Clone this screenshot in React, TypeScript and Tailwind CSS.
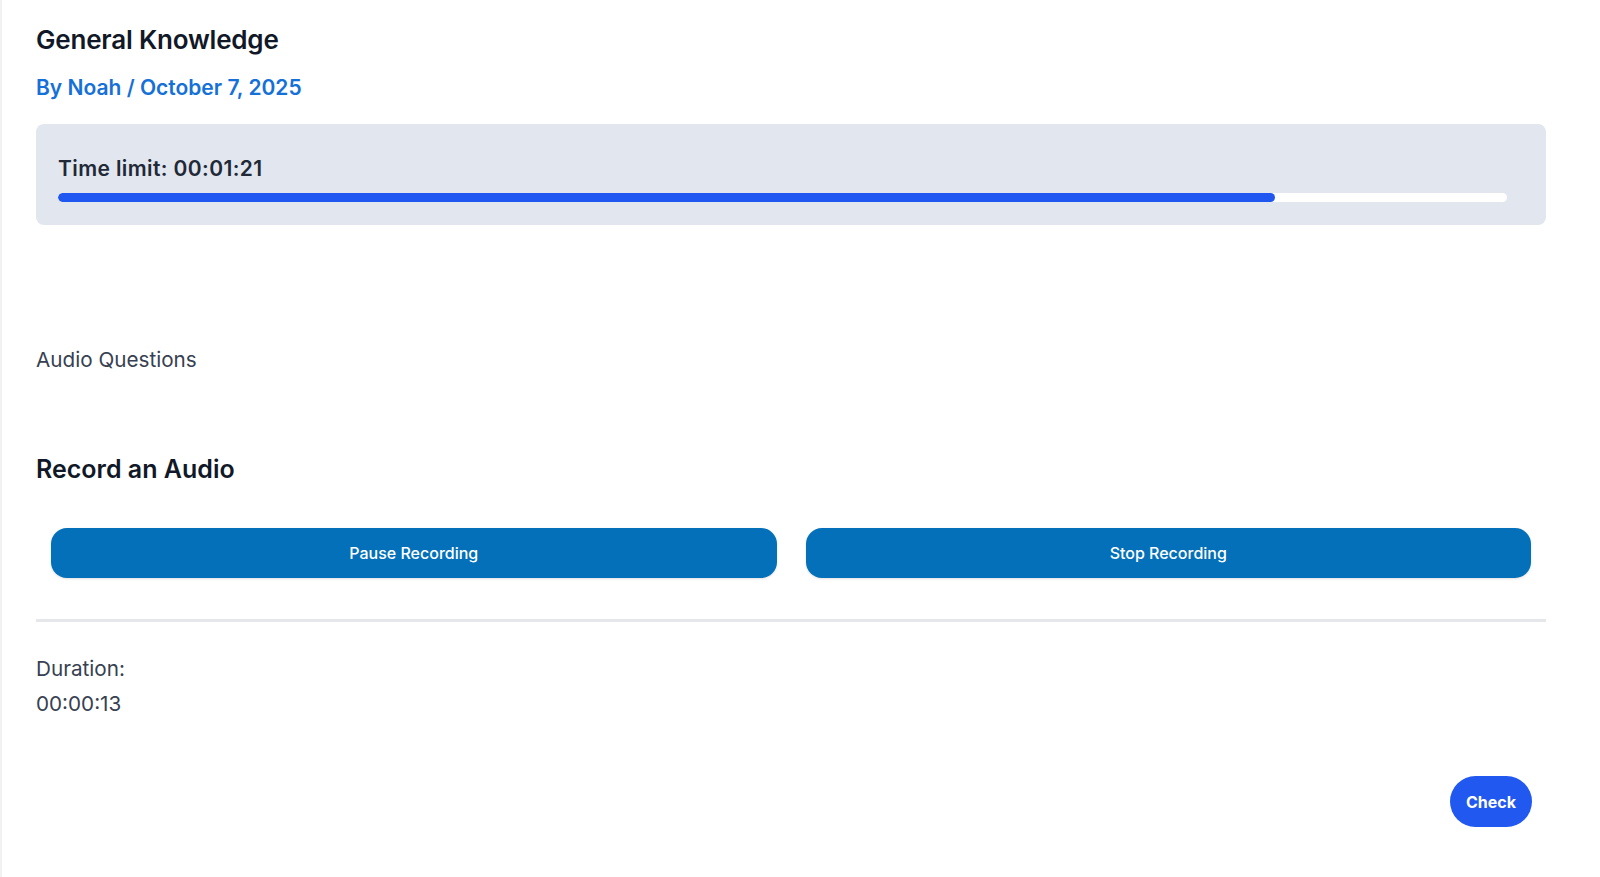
import React from 'react';

const font = { fontFamily: 'Inter, "Noto Sans", sans-serif' };

const QuizAudio: React.FC = () => {
  const elapsed = 84; // percent of time used

  return (
    <div style={font} className="min-h-[877px] bg-white border-l-2 border-l-[#f1f1f1] pl-[34px] pr-[54px] pt-[24px] text-[#1f2937]">
      <h1 className="text-[26px] leading-[31px] font-semibold text-[#111827] tracking-[-0.2px]">General Knowledge</h1>
      <p className="mt-[16px] text-[21px] leading-[33px] font-semibold text-[#1570d8]">By Noah / October 7, 2025</p>

      <div className="mt-[20px] h-[101px] rounded-lg bg-[#e2e6ee] pl-[22px] pr-[39px] pt-[31px]">
        <p className="text-[21px] leading-[28px] font-semibold text-[#1f2937] tracking-[0.4px]">Time limit: 00:01:21</p>
        <div className="mt-[10px] h-[9px] w-full rounded-full bg-white overflow-hidden">
          <div className="h-full rounded-full bg-[#2157f1]" style={{ width: `${elapsed}%` }} />
        </div>
      </div>

      <p className="mt-[121px] text-[20.7px] leading-[28px] text-[#374151]">Audio Questions</p>

      <h2 className="mt-[79px] text-[25px] leading-[32px] font-semibold text-[#111827]">Record an Audio</h2>

      <div className="mt-[43px] px-[15px] grid grid-cols-2 gap-[29px]">
        <button className="h-[50px] rounded-[16px] bg-[#0370b9] text-white text-[16px] font-medium shadow-sm">Pause Recording</button>
        <button className="h-[50px] rounded-[16px] bg-[#0370b9] text-white text-[16px] font-medium shadow-sm">Stop Recording</button>
      </div>

      <div className="mt-[41px] border-t-[3px] border-[#e5e7eb]" />

      <div className="mt-[29px] text-[20.7px] leading-[35px] text-[#374151]">
        <p>Duration:</p>
        <p>00:00:13</p>
      </div>

      <div className="mt-[55px] flex justify-end pr-[14px]">
        <button className="h-[51px] px-[16px] rounded-full bg-[#2158f0] text-white text-[16px] font-bold">Check</button>
      </div>
    </div>
  );
};

export default function App() {
  return <QuizAudio />;
}
